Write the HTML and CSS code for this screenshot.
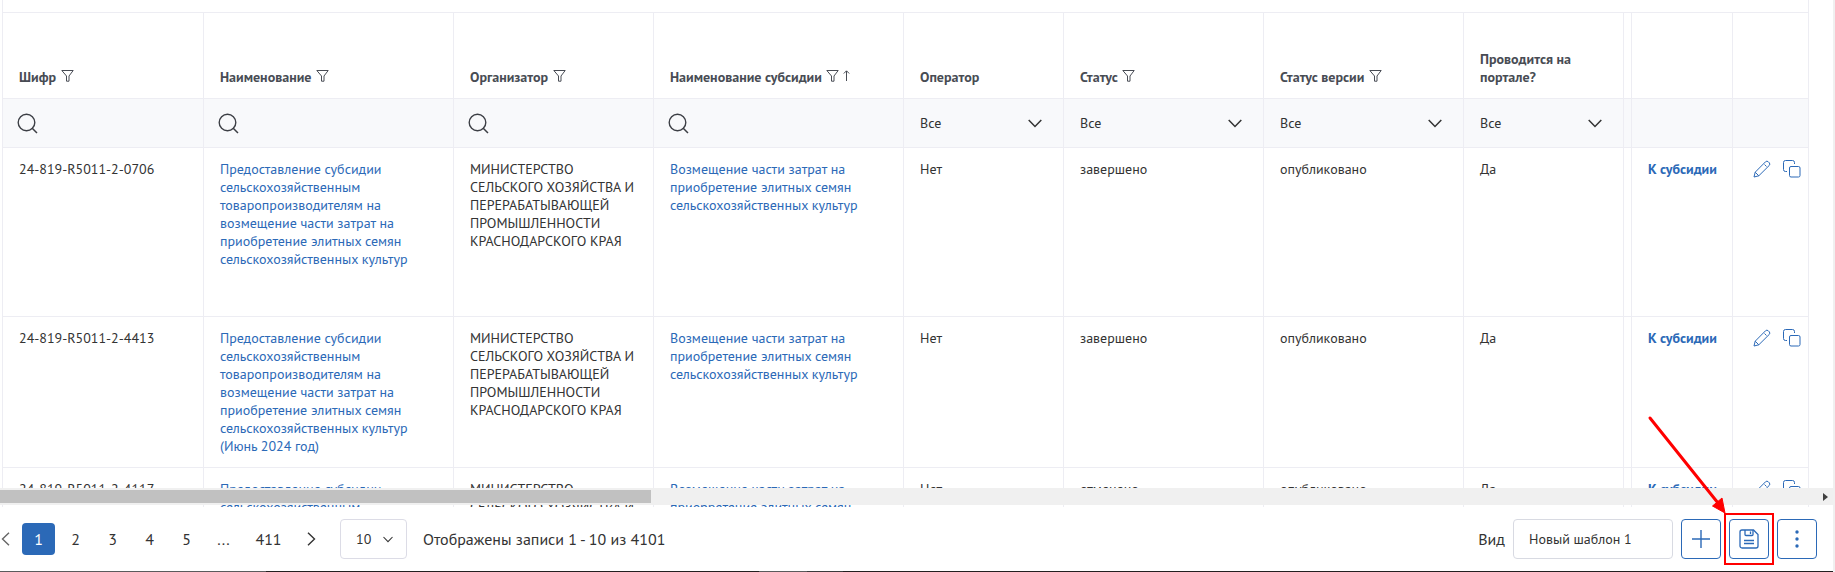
FILE: index.html
```html
<!DOCTYPE html>
<html lang="ru">
<head>
<meta charset="utf-8">
<title>Отборы</title>
<link rel="stylesheet" href="styles.css">
</head>
<body>
<svg class="sprite" aria-hidden="true">
  <symbol id="funnel" viewBox="0 0 13 12"><path d="M.8.5h11.4L8 6v5.2H5.5V6z" fill="none" stroke="currentColor"/></symbol>
  <symbol id="arrow-up" viewBox="0 0 7 12"><path d="M3.500 11V1M.8 3.500l2.700-2.700 2.700 2.700" fill="none" stroke="currentColor"/></symbol>
  <symbol id="lens" viewBox="0 0 21 21"><circle cx="9.500" cy="9.500" r="8.300" fill="none" stroke="currentColor" stroke-width="1.400"/><path d="M15 15l5 5" stroke="currentColor" stroke-width="1.500"/></symbol>
  <symbol id="chevron" viewBox="0 0 14 9"><path d="M.7 1L7 7.500 13.300 1" fill="none" stroke="currentColor" stroke-width="1.500"/></symbol>
  <symbol id="pencil" viewBox="0 0 18 18"><path d="M1 17l1.200-4.800L12.500 1.800a2 2 0 0 1 2.800 0l.9.900a2 2 0 0 1 0 2.800L5.800 15.800zM2.200 12.200l3.600 3.600M11.500 4.500l2 2" fill="none" stroke="currentColor" stroke-linejoin="round"/></symbol>
  <symbol id="copy" viewBox="0 0 18 18"><path d="M4 11.500H2.500a2 2 0 0 1-2-2v-7a2 2 0 0 1 2-2h7a2 2 0 0 1 2 2V4" fill="none" stroke="currentColor"/><rect x="6.500" y="6.500" width="10.500" height="10.500" rx="1.500" fill="none" stroke="currentColor"/></symbol>
</svg>
<main class="page">
  <div class="grid-area">
    <table class="grid">
      <colgroup><col class="c-code"><col class="c-wide"><col class="c-mid"><col class="c-wide"><col class="c-narrow"><col class="c-mid"><col class="c-mid"><col class="c-narrow"><col class="c-gap"><col class="c-link"><col class="c-act"></colgroup>
      <thead>
        <tr class="lead"><td colspan="11"></td></tr>
        <tr class="titles">
          <th>Шифр <svg class="funnel"><use href="#funnel"/></svg></th>
          <th>Наименование <svg class="funnel"><use href="#funnel"/></svg></th>
          <th>Организатор <svg class="funnel"><use href="#funnel"/></svg></th>
          <th>Наименование субсидии <svg class="funnel"><use href="#funnel"/></svg><svg class="sort"><use href="#arrow-up"/></svg></th>
          <th>Оператор</th>
          <th>Статус <svg class="funnel"><use href="#funnel"/></svg></th>
          <th>Статус версии <svg class="funnel"><use href="#funnel"/></svg></th>
          <th>Проводится на портале?</th>
          <th></th><th></th><th></th>
        </tr>
        <tr class="filters">
          <td><label class="search"><svg><use href="#lens"/></svg><input type="text" aria-label="Шифр"></label></td>
          <td><label class="search"><svg><use href="#lens"/></svg><input type="text" aria-label="Наименование"></label></td>
          <td><label class="search"><svg><use href="#lens"/></svg><input type="text" aria-label="Организатор"></label></td>
          <td><label class="search"><svg><use href="#lens"/></svg><input type="text" aria-label="Наименование субсидии"></label></td>
          <td><label class="pick"><select aria-label="Оператор"><option>Все</option></select><svg><use href="#chevron"/></svg></label></td>
          <td><label class="pick"><select aria-label="Статус"><option>Все</option></select><svg><use href="#chevron"/></svg></label></td>
          <td><label class="pick"><select aria-label="Статус версии"><option>Все</option></select><svg><use href="#chevron"/></svg></label></td>
          <td><label class="pick"><select aria-label="Проводится на портале?"><option>Все</option></select><svg><use href="#chevron"/></svg></label></td>
          <td></td><td></td><td></td>
        </tr>
      </thead>
      <tbody>
        <tr class="tall">
          <td>24-819-R5011-2-0706</td>
          <td><a href="#">Предоставление субсидии сельскохозяйственным товаропроизводителям на возмещение части затрат на приобретение элитных семян сельскохозяйственных культур</a></td>
          <td class="org">МИНИСТЕРСТВО СЕЛЬСКОГО ХОЗЯЙСТВА И ПЕРЕРАБАТЫВАЮЩЕЙ ПРОМЫШЛЕННОСТИ КРАСНОДАРСКОГО КРАЯ</td>
          <td><a href="#">Возмещение части затрат на приобретение элитных семян сельскохозяйственных культур</a></td>
          <td>Нет</td><td>завершено</td><td>опубликовано</td><td>Да</td><td></td>
          <td><a class="strong" href="#">К субсидии</a></td>
          <td><div class="acts"><button aria-label="Изменить"><svg><use href="#pencil"/></svg></button><button aria-label="Копировать"><svg><use href="#copy"/></svg></button></div></td>
        </tr>
        <tr>
          <td>24-819-R5011-2-4413</td>
          <td><a href="#">Предоставление субсидии сельскохозяйственным товаропроизводителям на возмещение части затрат на приобретение элитных семян сельскохозяйственных культур (Июнь 2024 год)</a></td>
          <td class="org">МИНИСТЕРСТВО СЕЛЬСКОГО ХОЗЯЙСТВА И ПЕРЕРАБАТЫВАЮЩЕЙ ПРОМЫШЛЕННОСТИ КРАСНОДАРСКОГО КРАЯ</td>
          <td><a href="#">Возмещение части затрат на приобретение элитных семян сельскохозяйственных культур</a></td>
          <td>Нет</td><td>завершено</td><td>опубликовано</td><td>Да</td><td></td>
          <td><a class="strong" href="#">К субсидии</a></td>
          <td><div class="acts"><button aria-label="Изменить"><svg><use href="#pencil"/></svg></button><button aria-label="Копировать"><svg><use href="#copy"/></svg></button></div></td>
        </tr>
        <tr>
          <td>24-819-R5011-2-4117</td>
          <td><a href="#">Предоставление субсидии сельскохозяйственным</a></td>
          <td class="org">МИНИСТЕРСТВО СЕЛЬСКОГО ХОЗЯЙСТВА И</td>
          <td><a href="#">Возмещение части затрат на приобретение элитных семян</a></td>
          <td>Нет</td><td>отменено</td><td>опубликовано</td><td>Да</td><td></td>
          <td><a class="strong" href="#">К субсидии</a></td>
          <td><div class="acts"><button aria-label="Изменить"><svg><use href="#pencil"/></svg></button><button aria-label="Копировать"><svg><use href="#copy"/></svg></button></div></td>
        </tr>
      </tbody>
    </table>
    <div class="hscroll"><div class="thumb"></div><svg class="next" viewBox="0 0 5 8"><path d="M0 0l5 4-5 4z" fill="#404040"/></svg></div>
  </div>
  <footer class="bar">
    <nav class="pager" aria-label="Страницы">
      <button class="step prev" aria-label="Назад"><svg viewBox="0 0 9 14"><path d="M8 .7L1.500 7 8 13.300" fill="none" stroke="currentColor" stroke-width="1.400"/></svg></button>
      <button class="num current">1</button><button class="num">2</button><button class="num">3</button><button class="num">4</button><button class="num">5</button><span class="num">...</span><button class="num">411</button>
      <button class="step fwd" aria-label="Вперёд"><svg viewBox="0 0 9 14"><path d="M1 .7L7.500 7 1 13.300" fill="none" stroke="currentColor" stroke-width="1.400"/></svg></button>
    </nav>
    <label class="size"><select aria-label="Записей на странице"><option>10</option></select><svg><use href="#chevron"/></svg></label>
    <span class="total">Отображены записи 1 - 10 из 4101</span>
    <div class="view">
      <label for="view">Вид</label>
      <input id="view" type="text" value="Новый шаблон 1">
      <button class="tool" aria-label="Добавить"><svg viewBox="0 0 20 20"><path d="M1 10h18M10 1v18" stroke="currentColor" stroke-width="1.400"/></svg></button>
      <div class="marked">
        <button class="tool" aria-label="Сохранить"><svg viewBox="0 0 20 20" fill="none" stroke="currentColor" stroke-width="1.300"><path d="M3 1h11.500L19 5.500V17a2 2 0 0 1-2 2H3a2 2 0 0 1-2-2V3a2 2 0 0 1 2-2z"/><path d="M6 1v4.500a1 1 0 0 0 1 1h6a1 1 0 0 0 1-1V1M11.500 2.500v2.500M5 11.500h10M5 14.500h10"/></svg></button>
        <svg class="pointer" viewBox="0 0 80 100"><path d="M3 3L71 88" stroke="#f00" stroke-width="3" stroke-linecap="round"/><path d="M78 98L65.500 91 75 83z" fill="#f00" stroke="#f00"/></svg>
      </div>
      <button class="tool" aria-label="Ещё"><svg viewBox="0 0 20 20" fill="currentColor"><circle cx="10" cy="3" r="1.700"/><circle cx="10" cy="10" r="1.700"/><circle cx="10" cy="17" r="1.700"/></svg></button>
    </div>
  </footer>
  <div class="edge"></div>
</main>
</body>
</html>
```
FILE: styles.css
```css
* { box-sizing: border-box; }
body {
  margin: 0;
  background: #fff;
  color: #333;
  font: 14px/18px "PT Sans", "Noto Sans", sans-serif;
}
button, input, select { font: inherit; color: inherit; margin: 0; padding: 0; border: 0; background: none; }
select { appearance: none; }
a { color: #2b69b7; text-decoration: none; }
.sprite { position: absolute; width: 0; height: 0; }

.page {
  height: 100vh;
  display: flex;
  flex-direction: column;
  overflow: hidden;
  border-right: 2px solid #f0f0f0;
}
.grid-area {
  position: relative;
  flex: 1;
  min-height: 0;
  overflow: hidden;
  padding: 0 24px 0 2px;
}
.grid {
  width: 100%;
  table-layout: fixed;
  border-collapse: separate;
  border-spacing: 0;
  border-left: 1px solid #ededf3;
}
.c-code { width: 201px; }
.c-wide { width: 250px; }
.c-mid { width: 200px; }
.c-narrow { width: 160px; }
.c-gap { width: 8px; }
.c-link { width: 101px; }
.c-act { width: 76px; }

.grid td, .grid th {
  padding: 12px 16px;
  vertical-align: top;
  text-align: left;
  border-right: 1px solid #ededf3;
  border-bottom: 1px solid #ededf3;
}
.grid td:nth-child(9), .grid th:nth-child(9) { padding: 0; }
.grid td:nth-child(10), .grid td:nth-child(11) { padding-right: 0; }
.grid .lead td { height: 13px; padding: 0; }
.grid .titles th { height: 86px; vertical-align: bottom; color: #484c54; white-space: nowrap; }
.grid .titles th:nth-child(8) { white-space: normal; }
.funnel { width: 13px; height: 12px; margin-left: 1px; }
.sort { width: 7px; height: 12px; margin-left: 4px; }
.grid .filters td { height: 49px; padding: 0 16px; vertical-align: middle; background: #f8f9fb; }
.search { display: flex; align-items: center; gap: 8px; margin-left: -2px; color: #3c3f45; }
.search svg { flex: none; width: 21px; height: 21px; }
.search input { width: 100%; min-width: 0; }
.pick { display: flex; align-items: center; padding-right: 5px; }
.pick select { flex: 1; min-width: 0; }
.pick svg { flex: none; width: 14px; height: 9px; }
.tall td { height: 169px; }
.org { padding-right: 12px; }
.strong { font-weight: 700; white-space: nowrap; }
.acts { display: flex; gap: 12px; padding-left: 4px; color: #2b69b7; }
.acts button { width: 18px; height: 18px; }
.acts svg { display: block; width: 18px; height: 18px; }

.hscroll {
  position: absolute;
  left: 0;
  right: 0;
  bottom: 2px;
  height: 17px;
  padding: 2px 0;
  display: flex;
  align-items: center;
  justify-content: space-between;
  background: #f0f0f0;
}
.thumb { width: 35.500%; height: 13px; background: #c1c1c1; }
.next { width: 5px; height: 8px; margin-right: 5px; }

.bar {
  height: 64px;
  flex: none;
  display: flex;
  align-items: center;
  padding-right: 16px;
  font-size: 16px;
}
.edge {
  flex: none;
  height: 1px;
  background: linear-gradient(90deg, #5a5a5c 14.500%, #231f20 14.500% 41.400%, #5a5a5c 41.400% 44%, #3a3a3c 44% 46%, #231f20 46%);
}
.pager { display: flex; align-items: center; gap: 4px; }
.num { width: 33px; height: 32px; line-height: 32px; text-align: center; border-radius: 4px; }
.num:nth-last-child(2) { width: 49px; }
.current { background: #2b69b7; color: #fff; }
.step { height: 32px; display: flex; align-items: center; }
.step svg { width: 9px; height: 14px; }
.prev { width: 18px; padding-left: 1px; color: #666; }
.fwd { width: 43px; padding-left: 10px; }
.size {
  display: flex;
  align-items: center;
  width: 67px;
  height: 40px;
  padding: 0 13px 0 15px;
  border: 1px solid #dcdce6;
  border-radius: 4px;
  font-size: 14px;
}
.size select { flex: 1; }
.size svg { width: 10px; height: 7px; }
.total { margin-left: 16px; white-space: nowrap; }
.view { display: flex; align-items: center; gap: 8px; margin-left: auto; }
.view input {
  width: 160px;
  height: 40px;
  padding: 0 15px;
  border: 1px solid #d8dae2;
  border-radius: 4px;
  font-size: 14px;
}
.tool {
  display: grid;
  place-items: center;
  width: 40px;
  height: 40px;
  border: 1px solid #2b69b7;
  border-radius: 4px;
  color: #2b69b7;
}
.tool svg { width: 20px; height: 20px; }
.marked { position: relative; }
.marked::after {
  content: "";
  position: absolute;
  inset: -6px -5px;
  border: 2px solid #f00;
  pointer-events: none;
}
.pointer { position: absolute; right: 42px; bottom: 44px; width: 80px; height: 100px; pointer-events: none; }
```
